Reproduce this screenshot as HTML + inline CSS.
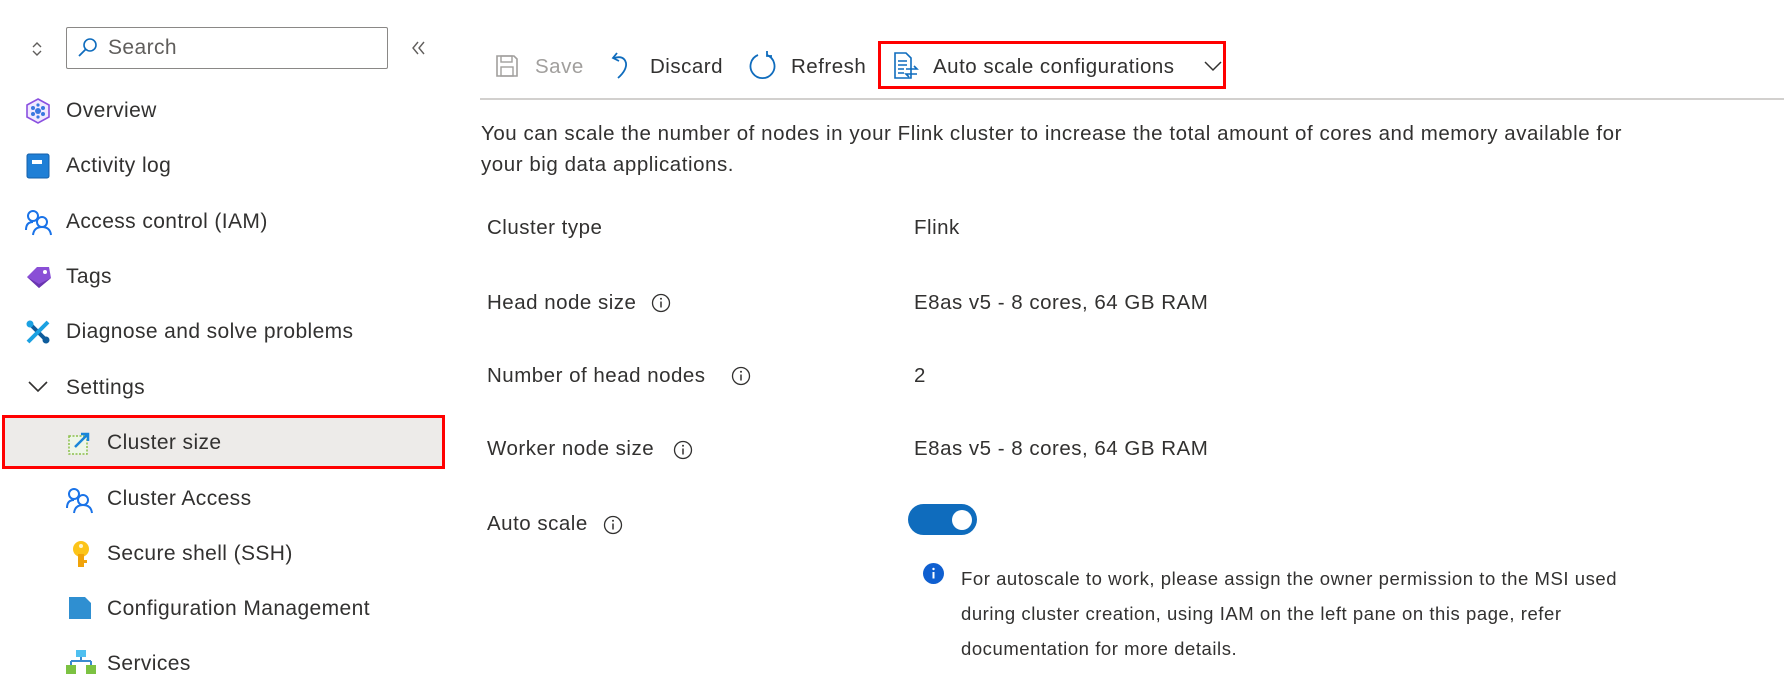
<!DOCTYPE html>
<html><head><meta charset="utf-8"><style>
body{margin:0;width:1784px;height:671px;overflow:hidden;background:#fff;font-family:"Liberation Sans",sans-serif;color:#323130;position:relative}
.a{position:absolute;white-space:nowrap}
.nav{font-size:21px;line-height:24px;letter-spacing:0.4px}
.m{font-size:20.5px;line-height:24px;letter-spacing:0.5px}
svg{position:absolute}
</style></head><body>
<svg style="left:30px;top:40px" width="14" height="18" viewBox="0 0 14 18"><path d="M3 7 L7 3 L11 7 M3 11 L7 15 L11 11" fill="none" stroke="#605e5c" stroke-width="1.4"/></svg>
<div class="a" style="left:66px;top:27px;width:320px;height:40px;border:1px solid #8a8886;border-radius:2px"></div>
<svg style="left:76px;top:36px" width="24" height="24" viewBox="0 0 24 24"><circle cx="14" cy="9" r="6" fill="none" stroke="#0f6cbd" stroke-width="1.6"/><path d="M10 13 L3 20" stroke="#0f6cbd" stroke-width="1.8"/></svg>
<div class="a nav" style="left:108px;top:36px;color:#605e5c">Search</div>
<svg style="left:410px;top:40px" width="18" height="16" viewBox="0 0 18 16"><path d="M8 2 L3 8 L8 14 M14 2 L9 8 L14 14" fill="none" stroke="#605e5c" stroke-width="1.4"/></svg>

<svg style="left:25px;top:98px" width="26" height="26" viewBox="0 0 26 26"><path d="M13 1 L24 7 L24 19 L13 25 L2 19 L2 7Z" fill="#f1e9ff" stroke="#8a50e0" stroke-width="1.6"/><circle cx="13" cy="13" r="3" fill="#3a78e0"/><circle cx="8" cy="10" r="2" fill="#3a78e0"/><circle cx="18" cy="10" r="2" fill="#3a78e0"/><circle cx="8" cy="16" r="2" fill="#3a78e0"/><circle cx="18" cy="16" r="2" fill="#3a78e0"/><circle cx="13" cy="7" r="1.6" fill="#3a78e0"/><circle cx="13" cy="19" r="1.6" fill="#3a78e0"/></svg>
<div class="a nav" style="left:66px;top:99px">Overview</div>
<svg style="left:26px;top:153px" width="24" height="26" viewBox="0 0 24 26"><rect x="1" y="1" width="22" height="24" rx="2" fill="#1f7fd6"/><rect x="1" y="1" width="22" height="24" rx="2" fill="none" stroke="#155fa8"/><rect x="6" y="7" width="10" height="4" fill="#fff"/></svg>
<div class="a nav" style="left:66px;top:154px">Activity log</div>
<svg style="left:24px;top:208px" width="30" height="28" viewBox="0 0 30 28"><circle cx="9" cy="8" r="5" fill="none" stroke="#1a73e8" stroke-width="2"/><path d="M2 22 Q2 14 9 14" fill="none" stroke="#1a73e8" stroke-width="2"/><circle cx="18" cy="14" r="5" fill="none" stroke="#1a73e8" stroke-width="2"/><path d="M9 27 Q10 19 18 19 Q26 19 27 27" fill="none" stroke="#1a73e8" stroke-width="2"/></svg>
<div class="a nav" style="left:66px;top:210px">Access control (IAM)</div>
<svg style="left:25px;top:264px" width="28" height="26" viewBox="0 0 28 26"><path d="M2 13 L12 3 L24 3 L26 14 L14 24Z" fill="#8a4fd6"/><path d="M2 13 L14 24 L26 14 L14 20Z" fill="#6a35b0"/><circle cx="20" cy="8" r="2" fill="#fff"/></svg>
<div class="a nav" style="left:66px;top:265px">Tags</div>
<svg style="left:25px;top:319px" width="26" height="26" viewBox="0 0 26 26"><path d="M3 3 L23 23" stroke="#0e5c9c" stroke-width="4"/><path d="M23 3 L3 23" stroke="#1ba1e2" stroke-width="4"/><circle cx="5" cy="5" r="3.5" fill="#1ba1e2"/><circle cx="21" cy="21" r="3.5" fill="#0e5c9c"/></svg>
<div class="a nav" style="left:66px;top:320px">Diagnose and solve problems</div>
<svg style="left:27px;top:380px" width="22" height="14" viewBox="0 0 22 14"><path d="M2 2 L11 11 L20 2" fill="none" stroke="#323130" stroke-width="1.6"/></svg>
<div class="a nav" style="left:66px;top:376px">Settings</div>

<div class="a" style="left:2px;top:415px;width:437px;height:48px;background:#edebe9;border:3px solid #f00"></div>
<svg style="left:67px;top:430px" width="26" height="26" viewBox="0 0 26 26"><rect x="2" y="6" width="18" height="18" fill="#eef6e8" stroke="#8cc04b" stroke-width="1.5" stroke-dasharray="2 1.5"/><path d="M8 17 L21 4 M14 4 L21 4 L21 11" fill="none" stroke="#1a86d9" stroke-width="2.5"/></svg>
<div class="a nav" style="left:107px;top:431px">Cluster size</div>
<svg style="left:65px;top:486px" width="30" height="28" viewBox="0 0 30 28"><circle cx="9" cy="8" r="5" fill="none" stroke="#1a73e8" stroke-width="2"/><path d="M2 22 Q2 14 9 14" fill="none" stroke="#1a73e8" stroke-width="2"/><circle cx="18" cy="14" r="5" fill="none" stroke="#1a73e8" stroke-width="2"/><path d="M9 27 Q10 19 18 19 Q26 19 27 27" fill="none" stroke="#1a73e8" stroke-width="2"/></svg>
<div class="a nav" style="left:107px;top:487px">Cluster Access</div>
<svg style="left:70px;top:540px" width="22" height="28" viewBox="0 0 22 28"><circle cx="11" cy="9" r="8" fill="#fcc419"/><rect x="8" y="14" width="6" height="13" fill="#f0a30a"/><rect x="14" y="20" width="3" height="3" fill="#f0a30a"/><circle cx="11" cy="6" r="2" fill="#fff6d0"/></svg>
<div class="a nav" style="left:107px;top:542px">Secure shell (SSH)</div>
<svg style="left:68px;top:596px" width="24" height="24" viewBox="0 0 24 24"><path d="M1 1 L17 1 L23 7 L23 23 L1 23Z" fill="#2f8fd1"/></svg>
<div class="a nav" style="left:107px;top:597px">Configuration Management</div>
<svg style="left:66px;top:650px" width="30" height="24" viewBox="0 0 30 24"><rect x="10" y="0" width="10" height="7" fill="#50c0f0"/><path d="M15 7 L15 11 M5 11 L25 11 M5 11 L5 15 M25 11 L25 15" stroke="#3a8ad0" stroke-width="2" fill="none"/><rect x="0" y="15" width="10" height="9" fill="#7cc242"/><rect x="20" y="15" width="10" height="9" fill="#7cc242"/></svg>
<div class="a nav" style="left:107px;top:652px">Services</div>

<svg style="left:495px;top:54px" width="24" height="24" viewBox="0 0 24 24"><path d="M2 2 L19 2 L22 5 L22 22 L2 22Z" fill="none" stroke="#a19f9d" stroke-width="1.6"/><rect x="6" y="2" width="11" height="6" fill="none" stroke="#a19f9d" stroke-width="1.4"/><rect x="6" y="13" width="12" height="9" fill="none" stroke="#a19f9d" stroke-width="1.4"/></svg>
<div class="a m" style="left:535px;top:55px;color:#a19f9d">Save</div>
<svg style="left:610px;top:50px" width="24" height="30" viewBox="0 0 24 30"><path d="M7 3 L3 8 L9 11" fill="none" stroke="#0f6cbd" stroke-width="1.8"/><path d="M4 8 Q14 5 16 13 Q17 20 8 28" fill="none" stroke="#0f6cbd" stroke-width="1.8"/></svg>
<div class="a m" style="left:650px;top:55px">Discard</div>
<svg style="left:748px;top:50px" width="30" height="32" viewBox="0 0 30 32"><path d="M10 5 A12 12 0 1 0 19 5" fill="none" stroke="#0f6cbd" stroke-width="1.8"/><path d="M19 1 L19 6 L24 6" fill="none" stroke="#0f6cbd" stroke-width="1.8"/></svg>
<div class="a m" style="left:791px;top:55px">Refresh</div>
<div class="a" style="left:878px;top:41px;width:342px;height:42px;border:3px solid #f00"></div>
<svg style="left:893px;top:52px" width="26" height="28" viewBox="0 0 26 28"><path d="M2 1 L13 1 L18 6 L18 26 L2 26Z" fill="none" stroke="#0f6cbd" stroke-width="1.6"/><path d="M5 9 L14 9 M5 13 L14 13 M5 17 L11 17 M5 21 L11 21" stroke="#0f6cbd" stroke-width="1.4"/><path d="M13 17 L24 17 L21 14 M24 22 L13 22 L16 25" fill="none" stroke="#0f6cbd" stroke-width="1.6"/></svg>
<div class="a m" style="left:933px;top:55px">Auto scale configurations</div>
<svg style="left:1203px;top:60px" width="20" height="12" viewBox="0 0 20 12"><path d="M2 2 L10 10 L18 2" fill="none" stroke="#323130" stroke-width="1.5"/></svg>
<div class="a" style="left:480px;top:98px;width:1304px;height:2px;background:#d2d0ce"></div>

<div class="a" style="left:481px;top:118px;line-height:31px;font-size:20.5px;letter-spacing:0.55px">You can scale the number of nodes in your Flink cluster to increase the total amount of cores and memory available for<br>your big data applications.</div>

<div class="a m" style="left:487px;top:216px">Cluster type</div>
<div class="a m" style="left:914px;top:216px">Flink</div>
<div class="a m" style="left:487px;top:291px">Head node size</div>
<svg style="left:651px;top:293px" width="20" height="20" viewBox="0 0 20 20"><circle cx="10" cy="10" r="8.5" fill="none" stroke="#323130" stroke-width="1.3"/><path d="M10 8.5 L10 14.5" stroke="#323130" stroke-width="1.5"/><circle cx="10" cy="5.8" r="1" fill="#323130"/></svg>
<div class="a m" style="left:914px;top:291px">E8as v5 - 8 cores, 64 GB RAM</div>
<div class="a m" style="left:487px;top:364px">Number of head nodes</div>
<svg style="left:731px;top:366px" width="20" height="20" viewBox="0 0 20 20"><circle cx="10" cy="10" r="8.5" fill="none" stroke="#323130" stroke-width="1.3"/><path d="M10 8.5 L10 14.5" stroke="#323130" stroke-width="1.5"/><circle cx="10" cy="5.8" r="1" fill="#323130"/></svg>
<div class="a m" style="left:914px;top:364px">2</div>
<div class="a m" style="left:487px;top:437px">Worker node size</div>
<svg style="left:673px;top:440px" width="20" height="20" viewBox="0 0 20 20"><circle cx="10" cy="10" r="8.5" fill="none" stroke="#323130" stroke-width="1.3"/><path d="M10 8.5 L10 14.5" stroke="#323130" stroke-width="1.5"/><circle cx="10" cy="5.8" r="1" fill="#323130"/></svg>
<div class="a m" style="left:914px;top:437px">E8as v5 - 8 cores, 64 GB RAM</div>
<div class="a m" style="left:487px;top:512px">Auto scale</div>
<svg style="left:603px;top:515px" width="20" height="20" viewBox="0 0 20 20"><circle cx="10" cy="10" r="8.5" fill="none" stroke="#323130" stroke-width="1.3"/><path d="M10 8.5 L10 14.5" stroke="#323130" stroke-width="1.5"/><circle cx="10" cy="5.8" r="1" fill="#323130"/></svg>
<div class="a" style="left:908px;top:504px;width:69px;height:31px;border-radius:16px;background:#0f6cbd"></div>
<div class="a" style="left:952px;top:510px;width:20px;height:20px;border-radius:50%;background:#fff"></div>

<svg style="left:923px;top:563px" width="21" height="21" viewBox="0 0 21 21"><circle cx="10.5" cy="10.5" r="10.5" fill="#0f5fd0"/><path d="M10.5 9 L10.5 15.5" stroke="#fff" stroke-width="2"/><circle cx="10.5" cy="6" r="1.2" fill="#fff"/></svg>
<div class="a" style="left:961px;top:561px;font-size:18.5px;line-height:35px;letter-spacing:0.55px">For autoscale to work, please assign the owner permission to the MSI used<br>during cluster creation, using IAM on the left pane on this page, refer<br>documentation for more details.</div>
</body></html>
